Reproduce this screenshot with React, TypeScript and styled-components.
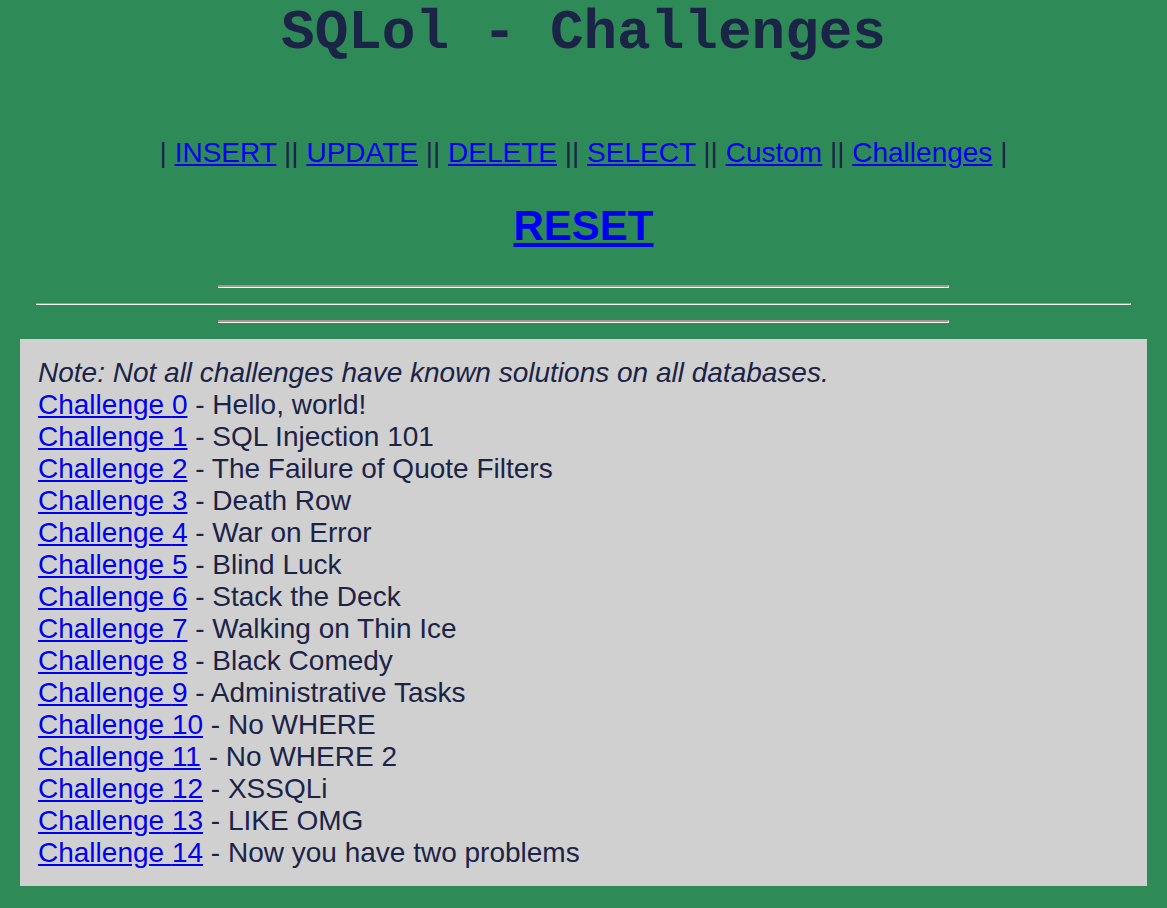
import styled, { createGlobalStyle } from 'styled-components'

const GlobalStyle = createGlobalStyle`
	html,
	body {
		margin: 0;
		padding: 0;
		background: #2e8b57;
	}
	body {
		font-family: 'Liberation Sans', Arial, sans-serif;
		color: #1b2347;
	}
`

const Page = styled.div`
	min-height: 100vh;
	padding: 0 20px 22px;
	box-sizing: border-box;
	display: flex;
	flex-direction: column;
	align-items: center;
`

const Title = styled.h1`
	margin: 5px 0 0;
	font-family: 'Liberation Mono', 'Courier New', monospace;
	font-size: 56px;
	line-height: 56px;
	font-weight: bold;
	color: #1b2347;
	text-align: center;
`

const Nav = styled.div`
	margin-top: 76px;
	font-size: 28px;
	text-align: center;
	color: #1b2347;
`

const Link = styled.a<{ $bold?: boolean }>`
	color: #0000ee;
	text-decoration: underline;
	font-weight: ${(p) => (p.$bold ? 'bold' : 'normal')};
`

const Reset = styled.h2`
	margin: 33px 0 0;
	font-size: 42px;
	font-weight: bold;
	text-align: center;
`

const Rules = styled.div`
	margin-top: 35px;
	display: flex;
	flex-direction: column;
	align-items: center;
	gap: 15px;
	width: 100%;
`

const Rule = styled.hr<{ $wide?: boolean }>`
	margin: 0;
	width: ${(p) => (p.$wide ? '1094px' : '730px')};
	height: 0;
	border: 0;
	border-top: ${(p) => (p.$wide ? '1px' : '2px')} solid #a4968f;
	border-bottom: 1px solid #f6f6f6;
	border-right: 1px solid #f6f6f6;
`

const Panel = styled.div`
	margin-top: 16px;
	align-self: stretch;
	background: #d0d0d0;
	padding: 18px 18px 17px;
	font-size: 28px;
	color: #1b2347;
`

const Note = styled.div`
	font-style: italic;
`

const Row = styled.div``

const challenges = [
	'Hello, world!',
	'SQL Injection 101',
	'The Failure of Quote Filters',
	'Death Row',
	'War on Error',
	'Blind Luck',
	'Stack the Deck',
	'Walking on Thin Ice',
	'Black Comedy',
	'Administrative Tasks',
	'No WHERE',
	'No WHERE 2',
	'XSSQLi',
	'LIKE OMG',
	'Now you have two problems',
]

const navItems = ['INSERT', 'UPDATE', 'DELETE', 'SELECT', 'Custom', 'Challenges']

export default function App() {
	return (
		<>
			<GlobalStyle />
			<Page>
				<Title>SQLol - Challenges</Title>
				<Nav>
					{navItems.map((item) => (
						<span key={item}>
							| <Link href="#">{item}</Link> |
						</span>
					))}
				</Nav>
				<Reset>
					<Link href="#" $bold>
						RESET
					</Link>
				</Reset>
				<Rules>
					<Rule />
					<Rule $wide />
					<Rule />
				</Rules>
				<Panel>
					<Note>Note: Not all challenges have known solutions on all databases.</Note>
					{challenges.map((name, i) => (
						<Row key={i}>
							<Link href="#">Challenge {i}</Link> - {name}
						</Row>
					))}
				</Panel>
			</Page>
		</>
	)
}
